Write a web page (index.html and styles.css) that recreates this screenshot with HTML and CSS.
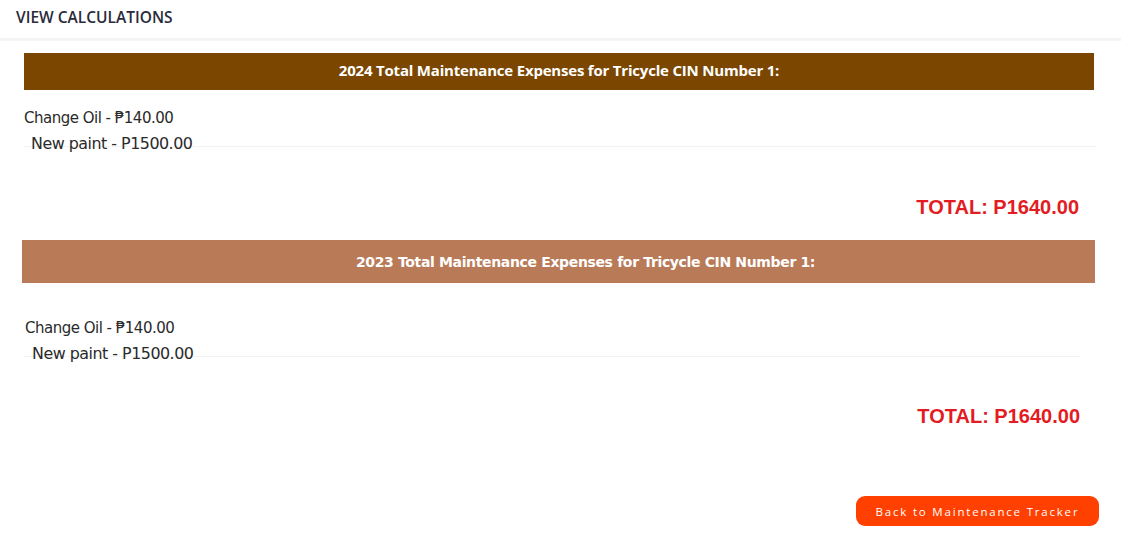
FILE: index.html
```html
<!DOCTYPE html>
<html>
<head>
<meta charset="utf-8">
<title>View Calculations</title>
<link rel="stylesheet" href="styles.css">
</head>
<body>
<header class="topbar">
  <h1 class="topbar-title">VIEW CALCULATIONS</h1>
</header>
<main class="content">
  <section class="year year-2024">
    <div class="year-bar bar-dark">2024 Total Maintenance Expenses for Tricycle CIN Number 1:</div>
    <div class="items">
      <div class="item item-first">Change Oil - ₱140.00</div>
      <div class="item item-second">New paint - P1500.00</div>
      <div class="rule"></div>
    </div>
    <div class="total">TOTAL: P1640.00</div>
  </section>
  <section class="year year-2023">
    <div class="year-bar bar-light">2023 Total Maintenance Expenses for Tricycle CIN Number 1:</div>
    <div class="items">
      <div class="item item-first">Change Oil - ₱140.00</div>
      <div class="item item-second">New paint - P1500.00</div>
      <div class="rule"></div>
    </div>
    <div class="total">TOTAL: P1640.00</div>
  </section>
  <div class="actions">
    <button class="back-btn">Back to Maintenance Tracker</button>
  </div>
</main>
</body>
</html>
```

FILE: styles.css
```css
* { box-sizing: border-box; }
html, body { margin: 0; padding: 0; background: #fff; }
body { font-family: "Open Sans", "Noto Sans", sans-serif; width: 1121px; }

.topbar {
  height: 41px;
  padding: 0 16px;
  display: flex;
  align-items: center;
  border-bottom: 3px solid #f4f4f4;
}
.topbar-title {
  margin: 0;
  margin-top: -4px;
  font-size: 15.5px;
  font-weight: 600;
  color: #2a2a3a;
}

.content { padding-top: 12px; }

.year-2024 { margin: 0 27px 0 24px; }
.year-2023 { margin: 21px 26px 0 22px; }

.year-bar {
  display: flex;
  align-items: center;
  justify-content: center;
  color: #fff;
  font-weight: 700;
}
.bar-dark {
  height: 37px;
  padding-bottom: 4px;
  background: #7b4700;
  font-family: "Open Sans", "Noto Sans", sans-serif;
  font-size: 15px;
  letter-spacing: -0.2px;
}
.bar-light {
  height: 43px;
  background: #b97a57;
  font-family: "DejaVu Sans", sans-serif;
  font-size: 14px;
  letter-spacing: -0.35px;
  padding-left: 54px;
}

.items {
  font-family: "DejaVu Sans", sans-serif;
  color: #2a2a2a;
}
.year-2024 .items { padding-top: 16px; }
.year-2023 .items { padding-top: 33px; }
.item-first { font-size: 15px; line-height: 24px; letter-spacing: -0.5px; }
.item-second { font-size: 15.9px; line-height: 28px; letter-spacing: -0.5px; padding-left: 7px; }
.year-2023 .item-first { padding-left: 3px; }
.year-2023 .item-second { padding-left: 10px; }

.rule {
  height: 1px;
  background: #f3f3f3;
  margin-top: -12px;
}
.year-2024 .rule { margin-right: -2px; }
.year-2023 .rule { margin-left: 2px; margin-right: 15px; }

.total {
  font-family: "Liberation Sans", Arial, sans-serif;
  font-weight: 700;
  color: #e31b23;
  font-size: 20px;
  line-height: 24px;
  text-align: right;
}
.year-2024 .total { margin-top: 48px; padding-right: 15px; }
.year-2023 .total { margin-top: 47px; padding-right: 15px; }

.actions {
  display: flex;
  justify-content: flex-end;
  padding: 68px 22px 0 0;
}
.back-btn {
  width: 243px;
  height: 30px;
  border: none;
  border-radius: 9px;
  background: #ff4000;
  color: #fff;
  font-family: "Open Sans", "Noto Sans", sans-serif;
  font-size: 11.5px;
  letter-spacing: 1.8px;
  cursor: pointer;
}
```
